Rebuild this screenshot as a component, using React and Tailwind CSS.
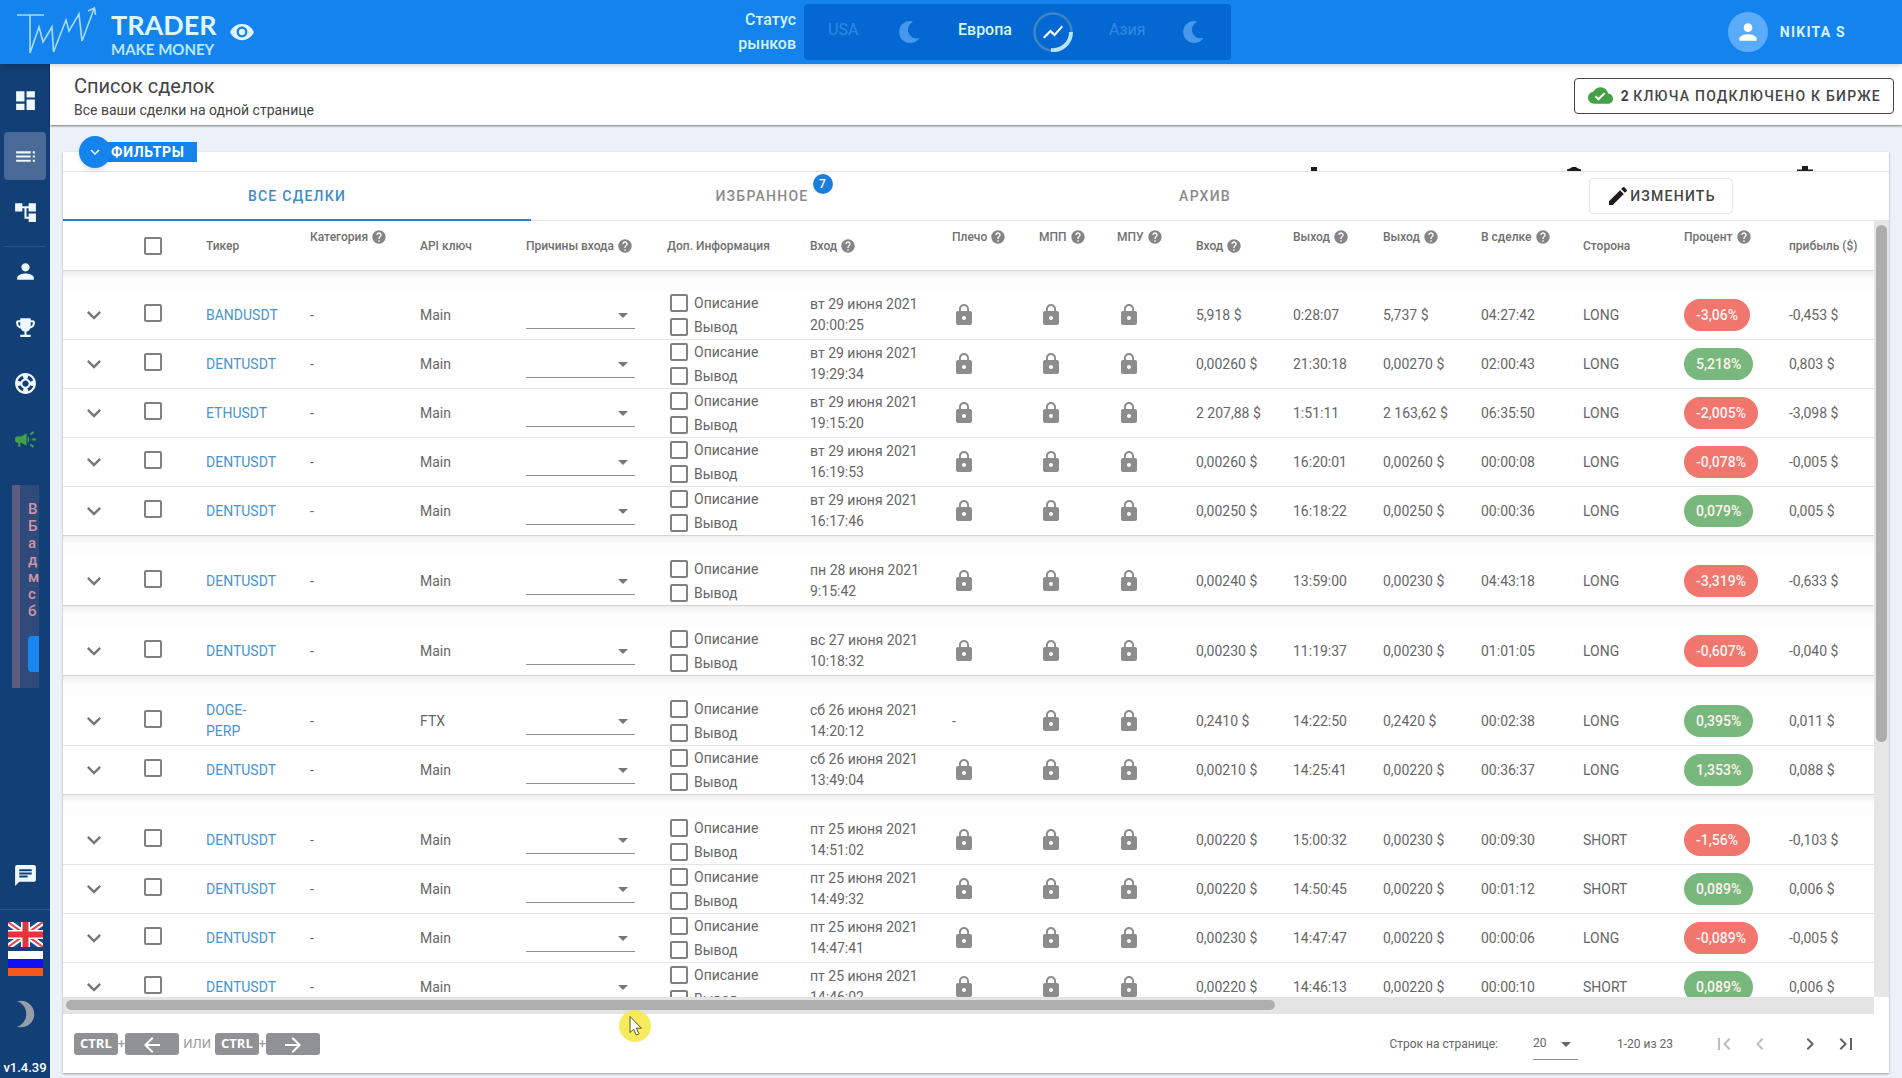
import React from 'react';
import {
  MdDashboard, MdToc, MdAccountTree, MdPerson, MdEmojiEvents, MdSupport, MdCampaign, MdChat,
  MdBrightness3, MdVisibility, MdShowChart, MdCloudDone, MdKeyboardArrowDown, MdEdit, MdHelp, MdLock,
  MdArrowBack, MdArrowForward, MdFirstPage, MdChevronLeft, MdChevronRight, MdLastPage, MdArrowDropDown,
} from 'react-icons/md';
import { FaMoon } from 'react-icons/fa';
import clsx from 'clsx';

const columns = [
  { label: 'Тикер', width: 'w-[104px]' },
  { label: 'Категория', help: true, top: true, width: 'w-[110px]' },
  { label: 'API ключ', width: 'w-[106px]' },
  { label: 'Причины входа', help: true, width: 'w-[141px]' },
  { label: 'Доп. Информация', width: 'w-[143px]' },
  { label: 'Вход', help: true, width: 'w-[142px]' },
  { label: 'Плечо', help: true, top: true, width: 'w-[87px]' },
  { label: 'МПП', help: true, top: true, width: 'w-[78px]' },
  { label: 'МПУ', help: true, top: true, width: 'w-[79px]' },
  { label: 'Вход', help: true, width: 'w-[97px]' },
  { label: 'Выход', help: true, top: true, width: 'w-[90px]' },
  { label: 'Выход', help: true, top: true, width: 'w-[98px]' },
  { label: 'В сделке', help: true, top: true, width: 'w-[102px]' },
  { label: 'Сторона', width: 'w-[101px]' },
  { label: 'Процент', help: true, top: true, width: 'w-[105px]' },
  { label: 'прибыль ($)', width: 'w-[95px]' },
];

// Trades grouped by day
const groups = [
  [
    { ticker: 'BANDUSDT', api: 'Main', date: 'вт 29 июня 2021', time: '20:00:25', entry: '5,918 $', exitTime: '0:28:07', exit: '5,737 $', duration: '04:27:42', side: 'LONG', percent: '-3,06%', profit: '-0,453 $' },
    { ticker: 'DENTUSDT', api: 'Main', date: 'вт 29 июня 2021', time: '19:29:34', entry: '0,00260 $', exitTime: '21:30:18', exit: '0,00270 $', duration: '02:00:43', side: 'LONG', percent: '5,218%', profit: '0,803 $' },
    { ticker: 'ETHUSDT', api: 'Main', date: 'вт 29 июня 2021', time: '19:15:20', entry: '2 207,88 $', exitTime: '1:51:11', exit: '2 163,62 $', duration: '06:35:50', side: 'LONG', percent: '-2,005%', profit: '-3,098 $' },
    { ticker: 'DENTUSDT', api: 'Main', date: 'вт 29 июня 2021', time: '16:19:53', entry: '0,00260 $', exitTime: '16:20:01', exit: '0,00260 $', duration: '00:00:08', side: 'LONG', percent: '-0,078%', profit: '-0,005 $' },
    { ticker: 'DENTUSDT', api: 'Main', date: 'вт 29 июня 2021', time: '16:17:46', entry: '0,00250 $', exitTime: '16:18:22', exit: '0,00250 $', duration: '00:00:36', side: 'LONG', percent: '0,079%', profit: '0,005 $' },
  ],
  [
    { ticker: 'DENTUSDT', api: 'Main', date: 'пн 28 июня 2021', time: '9:15:42', entry: '0,00240 $', exitTime: '13:59:00', exit: '0,00230 $', duration: '04:43:18', side: 'LONG', percent: '-3,319%', profit: '-0,633 $' },
  ],
  [
    { ticker: 'DENTUSDT', api: 'Main', date: 'вс 27 июня 2021', time: '10:18:32', entry: '0,00230 $', exitTime: '11:19:37', exit: '0,00230 $', duration: '01:01:05', side: 'LONG', percent: '-0,607%', profit: '-0,040 $' },
  ],
  [
    { ticker: 'DOGE-PERP', api: 'FTX', date: 'сб 26 июня 2021', time: '14:20:12', leverage: '-', entry: '0,2410 $', exitTime: '14:22:50', exit: '0,2420 $', duration: '00:02:38', side: 'LONG', percent: '0,395%', profit: '0,011 $' },
    { ticker: 'DENTUSDT', api: 'Main', date: 'сб 26 июня 2021', time: '13:49:04', entry: '0,00210 $', exitTime: '14:25:41', exit: '0,00220 $', duration: '00:36:37', side: 'LONG', percent: '1,353%', profit: '0,088 $' },
  ],
  [
    { ticker: 'DENTUSDT', api: 'Main', date: 'пт 25 июня 2021', time: '14:51:02', entry: '0,00220 $', exitTime: '15:00:32', exit: '0,00230 $', duration: '00:09:30', side: 'SHORT', percent: '-1,56%', profit: '-0,103 $' },
    { ticker: 'DENTUSDT', api: 'Main', date: 'пт 25 июня 2021', time: '14:49:32', entry: '0,00220 $', exitTime: '14:50:45', exit: '0,00220 $', duration: '00:01:12', side: 'SHORT', percent: '0,089%', profit: '0,006 $' },
    { ticker: 'DENTUSDT', api: 'Main', date: 'пт 25 июня 2021', time: '14:47:41', entry: '0,00230 $', exitTime: '14:47:47', exit: '0,00220 $', duration: '00:00:06', side: 'LONG', percent: '-0,089%', profit: '-0,005 $' },
    { ticker: 'DENTUSDT', api: 'Main', date: 'пт 25 июня 2021', time: '14:46:02', entry: '0,00220 $', exitTime: '14:46:13', exit: '0,00220 $', duration: '00:00:10', side: 'SHORT', percent: '0,089%', profit: '0,006 $' },
  ],
];

const checkboxClass = 'block size-[18px] shrink-0 appearance-none rounded-[2px] border-2 border-[#808080] bg-white';

function Logo() {
  return (
    <a href="#" aria-label="Trader Make Money" className="flex items-center gap-3.5">
      <svg width="80" height="50" viewBox="0 0 80 50" fill="none" stroke="#a9dcff" strokeWidth="1.6">
        <path d="M0 8h27M13 8v38l9-26 4 15 9-15 1.500 25L49 13l3 11L62 7l3 27L77 2" />
        <path d="M71 4l6.500-3 1 7" />
      </svg>
      <span className="flex flex-col pt-1 font-['Lato'] font-bold text-[#dff6ff]">
        <span className="text-[27px] leading-7">TRADER</span>
        <span className="mt-0.5 text-[15px] leading-4 text-[#b9e8ff]">MAKE MONEY</span>
      </span>
    </a>
  );
}

function MarketStatus() {
  return (
    <div className="flex items-center gap-2 text-base font-medium">
      <p className="w-20 text-right leading-6 text-[#d3f2ff]">Статус рынков</p>
      <div className="flex h-14 w-[427px] items-center rounded bg-[#0368d2]">
        <span className="ml-6 w-[70px] pb-1 font-normal text-[#3388e4]">USA</span>
        <FaMoon size={22} className="text-[#4798ec]" />
        <span className="ml-[38px] w-[75px] pb-1 text-[#d8f6ff]">Европа</span>
        <span className="relative grid size-10 place-items-center text-white">
          <svg className="absolute inset-0" width="40" height="40" viewBox="0 0 40 40" fill="none">
            <circle cx="20" cy="20" r="18.500" stroke="#3f85c6" strokeWidth="2.500" />
            <path d="M38 20A18 18 0 0 1 18 38" stroke="#b5e6ff" strokeWidth="4" />
          </svg>
          <MdShowChart size={24} />
        </span>
        <span className="ml-9 w-[73px] pb-1 font-normal text-[#3388e4]">Азия</span>
        <FaMoon size={22} className="text-[#4798ec]" />
      </div>
    </div>
  );
}

function TopBar() {
  return (
    <header className="relative z-20 flex h-16 shrink-0 items-center bg-[#1583ee] shadow-md">
      <div className="flex flex-[716] items-center gap-3">
        <div className="pl-[17px]"><Logo /></div>
        <button aria-label="Скрыть суммы" className="text-[#dff6ff]"><MdVisibility size={26} /></button>
      </div>
      <MarketStatus />
      <div className="flex flex-[671] justify-end">
        <div className="flex items-center gap-3 pr-14 text-sm font-bold tracking-[0.0892857em] text-[#d8f2ff]">
          <span className="grid size-10 place-items-center rounded-full bg-[#5aacfb] text-white"><MdPerson size={26} /></span>
          NIKITA S
        </div>
      </div>
    </header>
  );
}

function NavItem({ icon: Icon, label, active, className }) {
  return (
    <a
      href="#"
      aria-label={label}
      className={clsx('mx-1 grid h-12 place-items-center rounded', active && 'bg-[#4a6a97]', className)}
    >
      <Icon size={25} />
    </a>
  );
}

function Flags() {
  return (
    <div className="flex flex-col items-center gap-1">
      <button aria-label="English">
        <svg width="35" height="25" viewBox="0 0 35 25">
          <path d="M0 0h35v25H0z" fill="#174a8c" />
          <path d="M0 0l35 25M35 0L0 25" stroke="#fff" strokeWidth="6" />
          <path d="M0 0l35 25M35 0L0 25" stroke="#e5434f" strokeWidth="2" />
          <path d="M17.500 0v25M0 12.500h35" stroke="#fff" strokeWidth="9" />
          <path d="M17.500 0v25M0 12.500h35" stroke="#e8323f" strokeWidth="6" />
        </svg>
      </button>
      <button aria-label="Русский" className="flex h-[25px] w-[35px] flex-col">
        <span className="w-full flex-1 bg-white" />
        <span className="w-full flex-1 bg-[#1010f0]" />
        <span className="w-full flex-1 bg-[#f4581f]" />
      </button>
    </div>
  );
}

function Sidebar() {
  return (
    <nav className="flex w-[50px] shrink-0 flex-col bg-[#123f75] pt-3 text-[#eef8ff]">
      <div className="flex flex-col gap-2">
        <NavItem icon={MdDashboard} label="Панель" />
        <NavItem icon={MdToc} label="Сделки" active />
        <NavItem icon={MdAccountTree} label="Стратегии" />
      </div>
      <hr className="mx-1 mt-2.5 border-[#2a5488]" />
      <div className="flex flex-col gap-2">
        <NavItem icon={MdPerson} label="Профиль" />
        <NavItem icon={MdEmojiEvents} label="Рейтинг" />
        <NavItem icon={MdSupport} label="Помощь" />
        <NavItem icon={MdCampaign} label="Новости" className="text-[#43a047]" />
      </div>
      <div className="mt-[22px] mr-[11px] ml-3 border-l-8 border-[#5d5c80] bg-[#2f4a7b] py-4 pl-2">
        <p className="flex flex-col overflow-hidden text-[15px] leading-[17px] font-medium text-[#d294a4]">
          {['В', 'Б', 'а', 'д', 'м', 'с', 'б'].map((letter, i) => <span key={i}>{letter}</span>)}
        </p>
        <button aria-label="Подробнее" className="mt-4 block h-9 w-full rounded-l-sm bg-[#1a86f0]" />
      </div>
      <NavItem icon={MdChat} label="Чат" className="mt-auto" />
      <hr className="mt-2.5 mb-3 border-[#2a5488]" />
      <Flags />
      <button aria-label="Тёмная тема" className="mx-auto mt-[22px] text-[#969da6]"><MdBrightness3 size={32} /></button>
      <p className="mt-[30px] mb-0.5 text-center text-[13px] leading-4 font-medium text-white">v1.4.39</p>
    </nav>
  );
}

function PageHeader() {
  return (
    <div className="relative z-10 flex h-[61px] shrink-0 items-center justify-between bg-white pt-0.5 pr-2 pl-6 text-[#454545] shadow-[0_1px_2px_rgba(0,0,0,0.5)]">
      <div>
        <h1 className="text-xl leading-7">Список сделок</h1>
        <p className="text-sm leading-5">Все ваши сделки на одной странице</p>
      </div>
      <button className="flex h-9 items-center gap-2 rounded border border-[#444] pr-3 pl-[13px] text-sm font-medium tracking-[0.0892857em]">
        <MdCloudDone size={25} className="text-[#43a047]" />
        <span className="flex gap-[3px]"><b>2</b>КЛЮЧА ПОДКЛЮЧЕНО К БИРЖЕ</span>
      </button>
    </div>
  );
}

function FilterStrip() {
  return (
    <div className="relative h-5 shrink-0 border-b border-[#e4e4e4]">
      <button className="absolute -top-4 left-4 flex items-center text-sm font-bold tracking-wider text-white">
        <span className="z-10 grid size-8 place-items-center rounded-full bg-[#1583ee] shadow-md"><MdKeyboardArrowDown size={18} /></span>
        <span className="-ml-4 bg-[#1583ee] pr-3 pl-4 leading-5">ФИЛЬТРЫ</span>
      </button>
      <div className="flex h-full items-end justify-end pr-[76px] text-[#1c1c1c]">
        <svg className="mr-[244px]" width="16" height="5" viewBox="0 0 16 5"><path d="M5 1h6v4H5z" fill="currentColor" /></svg>
        <svg className="mr-[215px]" width="16" height="5" viewBox="0 0 16 5"><path d="M1 5V3.500L5 2l1-1h4l1 1 4 1.500V5z" fill="currentColor" /></svg>
        <svg width="16" height="5" viewBox="0 0 16 5"><path d="M0 5V3.500h5V0h6v3.500h5V5z" fill="currentColor" /></svg>
      </div>
    </div>
  );
}

function Tabs() {
  const tab = 'flex items-center justify-center';
  return (
    <div className="flex h-[49px] shrink-0 border-b border-[#e4e4e4] text-sm font-medium tracking-[0.0892857em] text-[#8a8a8a]">
      <button className={clsx(tab, '-mb-px flex-[468] border-b-2 border-[#2a7fd0] text-[#3b8ccc]')}>ВСЕ СДЕЛКИ</button>
      <button className={clsx(tab, 'flex-[462]')}>
        <span className="relative">
          ИЗБРАННОЕ
          <span className="absolute -top-3 left-full ml-1 grid size-5 place-items-center rounded-full bg-[#1c7ddb] text-xs tracking-normal text-white">7</span>
        </span>
      </button>
      <button className={clsx(tab, 'flex-[424]')}>АРХИВ</button>
      <div className={clsx(tab, 'flex-[472]')}>
        <button className="ml-4 flex h-9 items-center rounded border border-[#e4e4e4] px-4 tracking-[0.0892857em] text-[#444]">
          <MdEdit size={24} className="text-[#1c1c1c]" />
          ИЗМЕНИТЬ
        </button>
      </div>
    </div>
  );
}

function Lock() {
  return <MdLock size={24} className="text-[#8c8c8c]" />;
}

function TradeRow({ trade, id, last }) {
  const lost = trade.percent.startsWith('-');
  return (
    <tr className={clsx('h-[49px] *:border-b *:px-2.5', last ? '*:border-[#d4d4d4]' : '*:border-[#e6e6e6]')}>
      <td>
        <button aria-label="Развернуть" className="ml-[7px] block text-[#777]"><MdKeyboardArrowDown size={28} /></button>
      </td>
      <td>
        <input type="checkbox" aria-label={`Выбрать ${trade.ticker}`} className={clsx(checkboxClass, 'mb-1')} />
      </td>
      <td><a href="#" className="block w-[72px] text-[#4a93cf]">{trade.ticker}</a></td>
      <td>-</td>
      <td>{trade.api}</td>
      <td>
        <div className="relative w-[109px]">
          <select aria-label="Причины входа" className="block h-7 w-full appearance-none border-b border-[#8f8f8f]">
            <option></option>
          </select>
          <MdArrowDropDown size={24} className="pointer-events-none absolute top-0.5 right-0 text-[#777]" />
        </div>
      </td>
      <td>
        {['Описание', 'Вывод'].map((label) => (
          <div key={label} className="flex h-6 items-center gap-1.5 pl-[3px]">
            <input id={`${id}-${label}`} type="checkbox" className={checkboxClass} />
            <label htmlFor={`${id}-${label}`}>{label}</label>
          </div>
        ))}
      </td>
      <td className="whitespace-nowrap">{trade.date}<br />{trade.time}</td>
      <td>{trade.leverage || <Lock />}</td>
      <td><Lock /></td>
      <td><Lock /></td>
      <td className="whitespace-nowrap">{trade.entry}</td>
      <td>{trade.exitTime}</td>
      <td className="whitespace-nowrap">{trade.exit}</td>
      <td>{trade.duration}</td>
      <td>{trade.side}</td>
      <td>
        <span className={clsx('inline-flex h-8 items-center rounded-full px-3 align-middle font-medium text-[#fff3f0]', lost ? 'bg-[#f1766e]' : 'bg-[#79b87d]')}>
          {trade.percent}
        </span>
      </td>
      <td className="whitespace-nowrap">{trade.profit}</td>
    </tr>
  );
}

function TradesTable() {
  return (
    <table className="w-full table-fixed border-separate border-spacing-0 text-left text-sm leading-[21px] text-[#666]">
      <thead>
        <tr className="h-[49px] text-xs leading-4 text-[#707070] *:px-2.5">
          <th className="w-[71px]" />
          <th className="w-[62px]">
            <input type="checkbox" aria-label="Выбрать все" className={checkboxClass} />
          </th>
          {columns.map((col, i) => (
            <th key={i} className={clsx('font-medium whitespace-nowrap', col.width, col.top ? 'pt-2 align-top' : 'align-middle')}>
              <span className="inline-flex items-center gap-[3px]">
                {col.label}
                {col.help && <MdHelp size={16} className="text-[#858585]" />}
              </span>
            </th>
          ))}
        </tr>
      </thead>
      {groups.map((trades, g) => (
        <tbody key={g}>
          <tr className="h-[21px]">
            <td colSpan={18} className={clsx('bg-linear-to-b to-[#fdfdfd] to-40%', g === 0 ? 'border-t border-[#dcdcdc] from-[#ececec]' : 'from-[#efefef]')} />
          </tr>
          {trades.map((trade, i) => (
            <TradeRow key={i} id={`trade-${g}-${i}`} trade={trade} last={i === trades.length - 1} />
          ))}
        </tbody>
      ))}
    </table>
  );
}

function Key({ children }) {
  return <kbd className="grid h-[22px] place-items-center rounded-[3px] bg-[#8f9193] px-1.5 font-['Open_Sans'] text-[13px] font-bold text-white">{children}</kbd>;
}

function ArrowKey({ icon: Icon }) {
  return <kbd className="grid h-[22px] w-[54px] place-items-center rounded-[3px] bg-[#8f9193] text-white"><Icon size={24} /></kbd>;
}

function TableFooter() {
  return (
    <footer className="flex h-[59px] shrink-0 items-center justify-between pr-[31px] pl-[11px] text-xs text-[#666]">
      <div className="flex items-center text-[13px] text-[#999]">
        <Key>CTRL</Key>+<ArrowKey icon={MdArrowBack} />
        <span className="mx-1">ИЛИ</span>
        <Key>CTRL</Key>+<ArrowKey icon={MdArrowForward} />
      </div>
      <div className="flex items-center">
        <label htmlFor="page-size">Строк на странице:</label>
        <span className="relative ml-[35px]">
          <select id="page-size" className="block h-8 w-[45px] appearance-none border-b border-[#8f8f8f]">
            <option>20</option>
          </select>
          <MdArrowDropDown size={24} className="pointer-events-none absolute top-1 right-0" />
        </span>
        <span className="mx-[39px]">1-20 из 23</span>
        <div className="flex items-center gap-3">
          <button disabled aria-label="Первая" className="text-[#bdbdbd]"><MdFirstPage size={24} /></button>
          <button disabled aria-label="Назад" className="text-[#bdbdbd]"><MdChevronLeft size={24} /></button>
          <button aria-label="Вперёд" className="ml-3.5"><MdChevronRight size={24} /></button>
          <button aria-label="Последняя"><MdLastPage size={24} /></button>
        </div>
      </div>
    </footer>
  );
}

export default function App() {
  return (
    <div className="flex h-screen flex-col overflow-hidden bg-[#ecf1f9] font-['Roboto',sans-serif]">
      <TopBar />
      <div className="flex min-h-0 flex-1">
        <Sidebar />
        <main className="flex min-w-0 flex-1 flex-col">
          <PageHeader />
          <div className="flex min-h-0 flex-1 flex-col px-[13px] pt-[27px] pb-[5px]">
            <section className="flex min-h-0 flex-1 flex-col bg-white shadow-[0_1px_2px_rgba(0,0,0,0.35)]">
              <FilterStrip />
              <Tabs />
              <div className="flex min-h-0 flex-1">
                <div className="min-w-0 flex-1 overflow-hidden"><TradesTable /></div>
                <div className="w-[15px] bg-[#e6e6e6] px-0.5 pt-1">
                  <div className="h-[67%] rounded-full bg-[#adadad]" />
                </div>
              </div>
              <div className="mr-[15px] flex h-[17px] shrink-0 bg-[#e4e4e4] px-[3px] pt-[3px]">
                <div className="h-2.5 w-[67%] rounded-full bg-[#aeaeae]" />
              </div>
              <TableFooter />
            </section>
          </div>
        </main>
      </div>

      {/* Mouse pointer with its highlight */}
      <svg className="pointer-events-none fixed top-[1010px] left-[619px] z-30" width="32" height="32" viewBox="0 0 32 32">
        <circle cx="16" cy="16" r="16" fill="#f6e84b" fillOpacity="0.900" />
        <path d="M11 6.500v16l3.700-3.300 2.600 5.800 2.700-1.200-2.600-5.600h5z" fill="#fff" stroke="#5a5520" strokeWidth="1" />
      </svg>
    </div>
  );
}
